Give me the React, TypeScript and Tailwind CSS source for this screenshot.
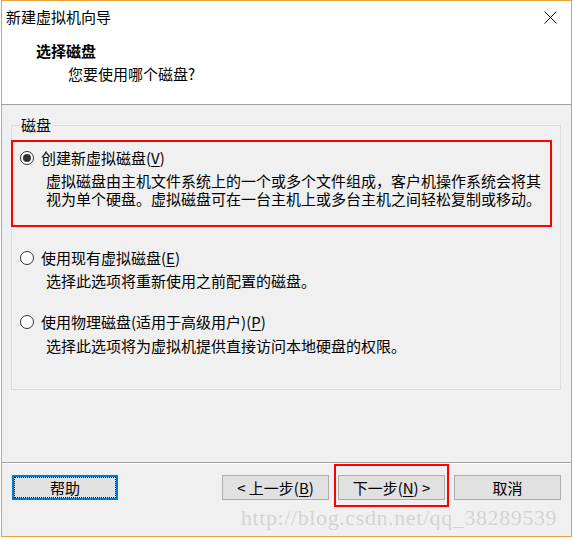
import React from "react";

const FONT = { fontFamily: '"Noto Sans CJK SC", "Noto Sans", sans-serif' };

function Radio({ checked }: { checked?: boolean }) {
  return (
    <div className="w-[14px] h-[14px] rounded-full border border-[#333333] bg-white flex items-center justify-center shrink-0">
      {checked && <div className="w-[8px] h-[8px] rounded-full bg-[#333333]" />}
    </div>
  );
}

function Btn({ children, w = "w-[107px]", extra = "" }: { children: React.ReactNode; w?: string; extra?: string }) {
  return (
    <div className={`${w} h-[25px] border border-[#adadad] bg-[#e1e1e1] flex items-center justify-center text-[15px] leading-[23px] text-black ${extra}`}>
      {children}
    </div>
  );
}

export default function App() {
  return (
    <div className="w-[574px] h-[539px] bg-white relative overflow-hidden" style={FONT}>
      <div className="ml-[1px] w-[571px] h-[537px] border border-[#e8a33b] flex flex-col bg-white text-black">
        {/* Title bar */}
        <div className="h-[31px] flex items-center justify-between pl-[4px] pr-[14px]">
          <span className="text-[15px] leading-[20px]">新建虚拟机向导</span>
          <svg width="13" height="13" viewBox="0 0 13 13" className="mt-[1px]">
            <path d="M0.5 0.5 L12.5 12.5 M12.5 0.5 L0.5 12.5" stroke="#000" strokeWidth="1" fill="none" />
          </svg>
        </div>
        {/* Header */}
        <div className="h-[72px] pl-[34px] pt-[9px]">
          <div className="text-[15px] leading-[20px] font-bold">选择磁盘</div>
          <div className="text-[15px] leading-[20px] mt-[3px] pl-[32px]">您要使用哪个磁盘?</div>
        </div>
        <div className="h-px bg-[#a0a0a0]" />
        {/* Body */}
        <div className="flex-1 bg-[#f0f0f0] flex flex-col">
          <div className="ml-[9px] mt-[20px] w-[550px] h-[265px] border border-[#dcdcdc] relative">
            <span className="absolute -top-[11px] left-[8px] px-[1px] bg-[#f0f0f0] text-[15px] leading-[20px]">磁盘</span>
            {/* Option 1 with red annotation */}
            <div className="mt-[14px] -ml-[1px] w-[541px] h-[87px] border-2 border-[#ff0000]">
              <div className="pt-[6px] pl-[7px] flex items-center gap-[7px] text-[15px] leading-[20px]">
                <Radio checked />
                <span>
                  创建新虚拟磁盘(<span className="underline underline-offset-2">V</span>)
                </span>
              </div>
              <div className="pl-[33px] mt-[4px] text-[15px] leading-[18px] whitespace-nowrap">
                <div>虚拟磁盘由主机文件系统上的一个或多个文件组成，客户机操作系统会将其</div>
                <div>视为单个硬盘。虚拟磁盘可在一台主机上或多台主机之间轻松复制或移动。</div>
              </div>
            </div>
            {/* Option 2 */}
            <div className="mt-[21px] pl-[8px] flex items-center gap-[7px] text-[15px] leading-[20px]">
              <Radio />
              <span>
                使用现有虚拟磁盘(<span className="underline underline-offset-2">E</span>)
              </span>
            </div>
            <div className="pl-[34px] mt-[4px] text-[15px] leading-[18px] whitespace-nowrap">
              选择此选项将重新使用之前配置的磁盘。
            </div>
            {/* Option 3 */}
            <div className="mt-[22px] pl-[8px] flex items-center gap-[7px] text-[15px] leading-[20px]">
              <Radio />
              <span>
                使用物理磁盘(适用于高级用户)(<span className="underline underline-offset-2">P</span>)
              </span>
            </div>
            <div className="pl-[34px] mt-[5px] text-[15px] leading-[18px] whitespace-nowrap">
              选择此选项将为虚拟机提供直接访问本地硬盘的权限。
            </div>
          </div>
          <div className="flex-1" />
          <div className="h-px bg-[#a0a0a0]" />
          <div className="h-px bg-white" />
          {/* Button bar */}
          <div className="flex-1 flex items-start justify-between pl-[10px] pr-[10px]">
            <div className="mt-[11px] w-[106px] h-[25px] border-2 border-[#0078d7] bg-[#e1e1e1] relative flex items-center justify-center text-[15px] leading-[21px]">
              <div className="absolute inset-0 border border-dotted border-black" />
              <span>帮助</span>
            </div>
            <div className="flex items-start gap-[5px]">
              <Btn extra="mt-[11px]">
                &lt; 上一步(<span className="underline underline-offset-2">B</span>)
              </Btn>
              <div className="border-2 border-[#ff0000] pt-[9px] pb-[5px] px-[2px]">
                <Btn>
                  下一步(<span className="underline underline-offset-2">N</span>) &gt;
                </Btn>
              </div>
              <Btn extra="mt-[11px]">取消</Btn>
            </div>
          </div>
        </div>
      </div>
      {/* Watermark */}
      <div
        className="pointer-events-none absolute left-[241px] top-[507px] text-[22px] leading-[22px] tracking-[0.6px] text-[#8c8c8c]/30 whitespace-nowrap"
        style={{ fontFamily: '"Liberation Serif", serif' }}
      >
        http://blog.csdn.net/qq_38289539
      </div>
    </div>
  );
}
